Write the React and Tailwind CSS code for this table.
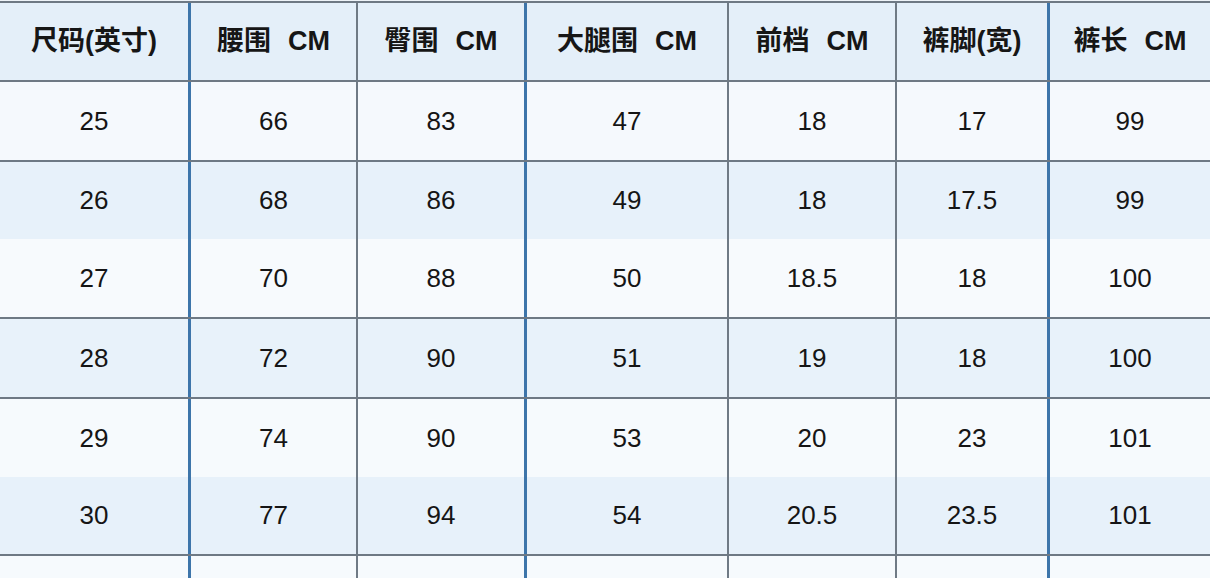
import React from "react";

const headers = [
  ["尺码(英寸)", ""],
  ["腰围", "CM"],
  ["臀围", "CM"],
  ["大腿围", "CM"],
  ["前档", "CM"],
  ["裤脚(宽)", ""],
  ["裤长", "CM"],
];

const rows = [
  { v: ["25", "66", "83", "47", "18", "17", "99"], bg: "bg-[#f5f9fd]", h: "h-[80px] border-b-2" },
  { v: ["26", "68", "86", "49", "18", "17.5", "99"], bg: "bg-[#e7f1fa]", h: "h-[77px]" },
  { v: ["27", "70", "88", "50", "18.5", "18", "100"], bg: "bg-[#f7fafd]", h: "h-[80px] border-b-2" },
  { v: ["28", "72", "90", "51", "19", "18", "100"], bg: "bg-[#e8f2fa]", h: "h-[80px] border-b-2" },
  { v: ["29", "74", "90", "53", "20", "23", "101"], bg: "bg-[#f6fafd]", h: "h-[78px]" },
  { v: ["30", "77", "94", "54", "20.5", "23.5", "101"], bg: "bg-[#e7f1fa]", h: "h-[79px] border-b-2" },
  { v: ["", "", "", "", "", "", ""], bg: "bg-[#f6fafd]", h: "h-[40px]" },
];

const colBorders = [
  "border-r-[3px] border-r-[#3d75aa]",
  "border-r-2 border-r-[#6f7a85]",
  "border-r-[3px] border-r-[#3d75aa]",
  "border-r-2 border-r-[#6f7a85]",
  "border-r-2 border-r-[#6f7a85]",
  "border-r-[3px] border-r-[#3d75aa]",
  "",
];

const gridCols = "grid grid-cols-[191px_167px_169px_202px_168px_153px_160px]";

export default function App() {
  return (
    <div
      className="w-[1210px] h-[578px] overflow-hidden bg-[#eef3f8] pt-px"
      style={{ fontFamily: '"Liberation Sans", "Noto Sans CJK SC", sans-serif' }}
    >
      <div className="border-t-2 border-t-[#6e7984]">
        <div className={`${gridCols} h-[79px] border-b-2 border-b-[#6e7984] bg-[#e4eff9]`}>
          {headers.map(([cn, unit], i) => (
            <div
              key={i}
              className={`flex items-center justify-center text-[27px] font-bold text-[#161616] ${colBorders[i]}`}
            >
              <span>{cn}</span>
              {unit && <span className="ml-[17px]">{unit}</span>}
            </div>
          ))}
        </div>
        {rows.map((r, ri) => (
          <div key={ri} className={`${gridCols} ${r.h} border-b-[#6e7984] ${r.bg}`}>
            {r.v.map((val, ci) => (
              <div
                key={ci}
                className={`flex items-center justify-center text-[26px] text-[#151515] ${colBorders[ci]}`}
              >
                {val}
              </div>
            ))}
          </div>
        ))}
      </div>
    </div>
  );
}
